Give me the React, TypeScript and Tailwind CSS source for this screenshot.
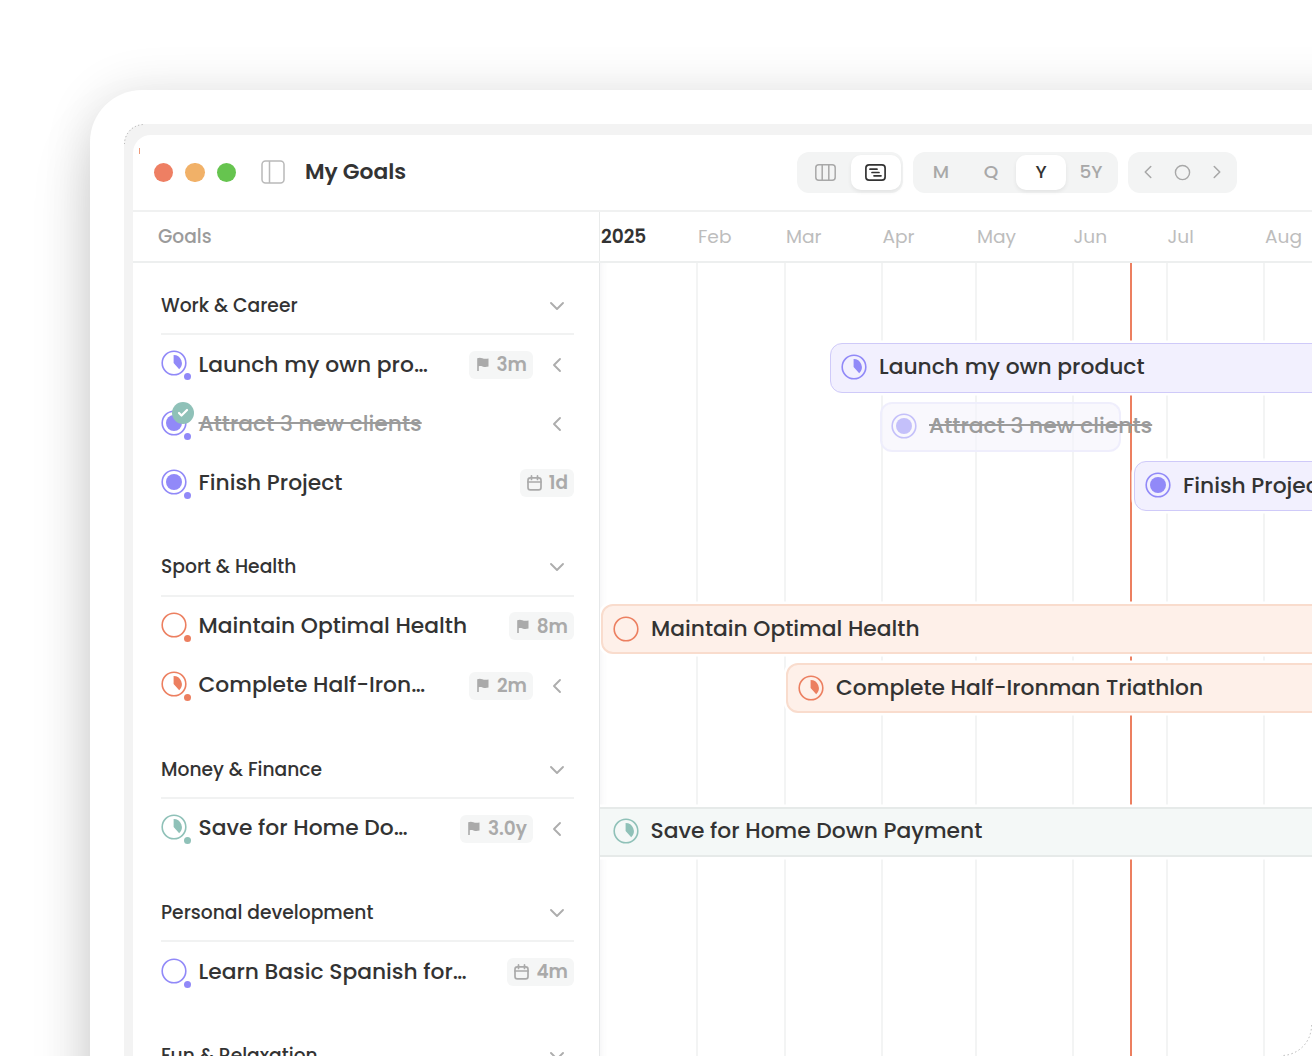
import { Check, ChevronDown, ChevronLeft, ChevronRight, Circle } from "lucide-react"
import { clsx } from "clsx"

type Tone = "violet" | "orange" | "teal"
type Progress = "empty" | "part" | "full"

interface Goal {
  title: string
  short?: string
  tone: Tone
  progress: Progress
  due?: string
  dueIcon?: "flag" | "calendar"
  hasChildren?: boolean
  done?: boolean
  bar?: string
}

interface Section {
  name: string
  goals: Goal[]
}

const sections: Section[] = [
  {
    name: "Work & Career",
    goals: [
      {
        title: "Launch my own product",
        short: "Launch my own pro…",
        tone: "violet",
        progress: "part",
        due: "3m",
        dueIcon: "flag",
        hasChildren: true,
        bar: "ml-[229.5px] w-[600px]",
      },
      {
        title: "Attract 3 new clients",
        tone: "violet",
        progress: "full",
        hasChildren: true,
        done: true,
        bar: "ml-[279.5px] w-[241.5px]",
      },
      {
        title: "Finish Project",
        tone: "violet",
        progress: "full",
        due: "1d",
        dueIcon: "calendar",
        bar: "ml-[533.5px] w-[300px]",
      },
    ],
  },
  {
    name: "Sport & Health",
    goals: [
      {
        title: "Maintain Optimal Health",
        tone: "orange",
        progress: "empty",
        due: "8m",
        dueIcon: "flag",
        bar: "ml-[1px] w-[900px]",
      },
      {
        title: "Complete Half-Ironman Triathlon",
        short: "Complete Half-Iron…",
        tone: "orange",
        progress: "part",
        due: "2m",
        dueIcon: "flag",
        hasChildren: true,
        bar: "ml-[186px] w-[800px]",
      },
    ],
  },
  {
    name: "Money & Finance",
    goals: [
      {
        title: "Save for Home Down Payment",
        short: "Save for Home Do…",
        tone: "teal",
        progress: "part",
        due: "3.0y",
        dueIcon: "flag",
        hasChildren: true,
        bar: "w-[900px] rounded-none border-x-0 pl-[12.5px]",
      },
    ],
  },
  {
    name: "Personal development",
    goals: [
      {
        title: "Learn Basic Spanish for…",
        tone: "violet",
        progress: "empty",
        due: "4m",
        dueIcon: "calendar",
      },
    ],
  },
  { name: "Fun & Relaxation", goals: [] },
]

const months = [
  { label: "2025", width: "w-[98px]" },
  { label: "Feb", width: "w-[88px]" },
  { label: "Mar", width: "w-[96.5px]" },
  { label: "Apr", width: "w-[94.5px]" },
  { label: "May", width: "w-[96.5px]" },
  { label: "Jun", width: "w-[94px]" },
  { label: "Jul", width: "w-[97.5px]" },
  { label: "Aug", width: "w-[98px]" },
]

const toneText: Record<Tone, string> = {
  violet: "text-[#9189f8]",
  orange: "text-[#ec7f60]",
  teal: "text-[#8fc1b8]",
}

const toneBar: Record<Tone, string> = {
  violet: "border border-[#cfcaf9] bg-[#f2f0fe] pl-[10.5px]",
  orange: "border-2 border-[#f9dccd] bg-[#fef0e9] pl-[10px]",
  teal: "border-2 border-[#e6eae9] bg-[#f4f8f7]",
}

function ProgressIcon({ tone, progress, className }: { tone: Tone; progress: Progress; className?: string }) {
  return (
    <svg viewBox="0 0 26 26" className={clsx("size-[26px] shrink-0", toneText[tone], className)}>
      <circle cx="13" cy="13" r="11.8" fill="none" stroke="currentColor" strokeWidth="1.6" />
      {progress === "full" && <circle cx="13" cy="13" r="8" fill="currentColor" />}
      {progress === "part" && <path d="M12.6 13V5a8.2 8.2 0 0 1 5.6 14.2Z" fill="currentColor" />}
    </svg>
  )
}

function FlagIcon() {
  return (
    <svg viewBox="0 0 14 15" className="h-[15px] w-[14px]" fill="currentColor">
      <path d="M1.2 1.3c1.8-.8 3.3-.8 5.1-.1 1.9.7 3.7.8 6.2.2v8.2c-2.3.7-4.2.6-6-.1-1.4-.5-2.5-.6-3.7-.2v4.7H1.2Z" />
    </svg>
  )
}

function CalendarIcon() {
  return (
    <svg viewBox="0 0 15 16" className="h-4 w-[15px]" fill="none" stroke="currentColor" strokeWidth="1.7" strokeLinecap="round">
      <rect x="1" y="2.8" width="13" height="12" rx="2.4" />
      <path d="M1 7h13M4.5.9v3.6M10.5.9v3.6" />
    </svg>
  )
}

function DueBadge({ goal }: { goal: Goal }) {
  return (
    <div className="flex h-7 items-center gap-[7px] rounded-md bg-[#f5f6f6] pr-[6px] pl-[7px] text-[18.5px] font-semibold text-[#aaaaaa]">
      {goal.dueIcon === "flag" ? <FlagIcon /> : <CalendarIcon />}
      <span>{goal.due}</span>
    </div>
  )
}

function GoalRow({ goal }: { goal: Goal }) {
  return (
    <div className="flex h-[59.15px] items-center">
      <div className="relative -ml-[0.5px] mr-[12px]">
        <ProgressIcon tone={goal.tone} progress={goal.progress} className="-mt-[3px]" />
        <span className={clsx("absolute top-[20px] left-[23.5px] size-[7px] rounded-full bg-current", toneText[goal.tone])} />
        {goal.done && (
          <span className="absolute -top-[11px] left-[11.5px] flex size-[22px] items-center justify-center rounded-full bg-[#8fc1b8] text-white">
            <Check className="size-3" strokeWidth={4.5} />
          </span>
        )}
      </div>
      <span
        className={clsx(
          "flex-1 text-[21.8px] font-medium whitespace-nowrap",
          goal.done ? "text-[#9b9b9b] line-through decoration-[1.5px]" : "text-[#333333]",
        )}
      >
        {goal.short ?? goal.title}
      </span>
      {goal.due && <DueBadge goal={goal} />}
      {goal.hasChildren && <ChevronLeft className="mr-[5px] ml-3 size-6 text-[#adadad]" strokeWidth={1.9} />}
    </div>
  )
}

function GoalBar({ goal }: { goal: Goal }) {
  return (
    <div className="flex h-[59.15px] items-center">
      {goal.bar && (
        <div
          className={clsx(
            "flex h-[50px] shrink-0 items-center gap-3",
            goal.tone !== "teal" && "rounded-xl",
            goal.done
              ? "border-2 border-[#eeecfd]/80 bg-[#f5f4fb]/60 pl-[9.5px]"
              : clsx(toneBar[goal.tone], "shadow-[0_0_0_2.5px_#fff]"),
            goal.bar,
          )}
        >
          <ProgressIcon tone={goal.tone} progress={goal.progress} className={clsx("-mt-px", goal.done && "opacity-50")} />
          <span
            className={clsx(
              "text-[21.8px] font-medium whitespace-nowrap",
              goal.done ? "text-[#9b9b9b] line-through decoration-[1.5px]" : "text-[#333333]",
            )}
          >
            {goal.title}
          </span>
        </div>
      )}
    </div>
  )
}

function Toolbar() {
  const pill = "flex h-[41px] items-center rounded-xl bg-[#f3f4f4]"
  const active = "rounded-[10px] bg-white text-[#333333] shadow-[0_2px_4px_rgba(0,0,0,0.07)]"
  return (
    <div className="flex gap-2.5 text-[#a8a8a8]">
      <div className={clsx(pill, "w-[106px] pl-[3.5px]")}>
        <button className="flex h-[35px] w-[50px] items-center justify-center">
          <svg viewBox="0 0 21 17" className="h-[17px] w-[21px]" fill="none" stroke="currentColor" strokeWidth="1.5">
            <rect x=".8" y=".8" width="19.4" height="15.4" rx="3" />
            <path d="M7.2.8v15.4M13.8.8v15.4" />
          </svg>
        </button>
        <button className={clsx("flex h-[35px] w-[50px] items-center justify-center", active)}>
          <svg viewBox="0 0 21 17" className="h-[17px] w-[21px]" fill="none" stroke="currentColor" strokeWidth="1.7" strokeLinecap="round">
            <rect x=".9" y=".9" width="19.2" height="15.2" rx="3.2" />
            <path d="M5 5.2h7M7 8.5h7M9 11.8h7" />
          </svg>
        </button>
      </div>
      <div className={clsx(pill, "w-[205px] pl-[3px] text-[18.5px] font-medium")}>
        {["M", "Q", "Y", "5Y"].map((range) => (
          <button key={range} className={clsx("h-[35px] w-[50px] pb-px", range === "Y" && active)}>
            {range}
          </button>
        ))}
      </div>
      <div className={clsx(pill, "w-[109px] justify-between px-[9px]")}>
        <ChevronLeft className="size-[22px]" strokeWidth={1.7} />
        <Circle className="size-[17px]" strokeWidth={2} />
        <ChevronRight className="size-[22px]" strokeWidth={1.7} />
      </div>
    </div>
  )
}

function Sidebar() {
  return (
    <aside className="w-[467px] shrink-0 border-r border-[#e6e8e9] pt-[13.5px] pr-[25px] pl-7">
      {sections.map((section) => (
        <section key={section.name} className="pb-[25.2px]">
          <div className="flex h-[58.9px] items-center justify-between border-b-2 border-[#f1f2f2] pt-[2px]">
            <h2 className="text-[18.7px] font-medium text-[#333333]">{section.name}</h2>
            <ChevronDown className="mr-[5px] size-6 text-[#adadad]" strokeWidth={1.9} />
          </div>
          {section.goals.map((goal) => (
            <GoalRow key={goal.title} goal={goal} />
          ))}
        </section>
      ))}
    </aside>
  )
}

function Timeline() {
  return (
    <div className="relative flex-1 overflow-hidden shadow-[inset_8px_0_8px_-8px_rgba(60,60,90,0.08)]">
      {/* Month grid and today marker */}
      <div className="absolute inset-0 flex">
        {months.map((month) => (
          <div key={month.label} className={clsx("shrink-0 border-r-2 border-[#f3f4f4]", month.width)} />
        ))}
      </div>
      <div className="absolute inset-y-0 left-[530px] w-[2px] bg-[#ec7f60]" />

      <div className="relative pt-[16.2px]">
        {sections.map((section) => (
          <div key={section.name} className="pt-[58.9px] pb-[25.2px]">
            {section.goals.map((goal) => (
              <GoalBar key={goal.title} goal={goal} />
            ))}
          </div>
        ))}
      </div>
    </div>
  )
}

export default function App() {
  return (
    <div className="relative h-[1056px] w-[1312px] overflow-hidden bg-white pt-[90px] pl-[90px] font-['Poppins','Inter',sans-serif]">
      <div className="h-[1200px] w-[1500px] rounded-[52px] bg-white pt-[34px] pl-[34px] shadow-[0_0_50px_rgba(0,0,0,0.11),0_40px_60px_rgba(0,0,0,0.15)]">
        <div className="h-[1150px] w-[1450px] rounded-[20px] bg-[#f3f3f3] pt-[11px] pl-[9px]">
          <div className="flex h-[1130px] w-[1179px] flex-col overflow-hidden rounded-tl-[18px] bg-white">
            <header className="flex h-[76.5px] shrink-0 items-center border-b-2 border-[#f0f1f1] pr-[75px] pl-[21px]">
              <div className="flex gap-3">
                <span className="size-[19.3px] rounded-full bg-[#ee7f63]" />
                <span className="size-[19.3px] rounded-full bg-[#f1b168]" />
                <span className="size-[19.3px] rounded-full bg-[#66c44f]" />
              </div>
              <svg viewBox="0 0 24 24" className="ml-[25.5px] size-6 text-[#b9b9b9]" fill="none" stroke="currentColor" strokeWidth="1.5">
                <rect x="1" y="1" width="22" height="22" rx="3.5" />
                <path d="M8.5 1v22" />
              </svg>
              <h1 className="ml-[19.5px] flex-1 pt-px text-[21.8px] font-semibold text-[#333333]">My Goals</h1>
              <Toolbar />
            </header>
            <div className="flex h-[51.5px] shrink-0 items-center border-b-2 border-[#edefef] text-[18.6px]">
              <div className="flex h-full w-[467px] shrink-0 items-center border-r border-[#e9ebeb] pt-[2px] pl-[25px] font-medium text-[#9b9b9b]">
                Goals
              </div>
              {months.map((month, index) => (
                <div
                  key={month.label}
                  className={clsx("shrink-0 pt-[2px]", month.width, index === 0 ? "pl-px font-semibold text-[#333333]" : "text-[#bdbdbd]")}
                >
                  {month.label}
                </div>
              ))}
            </div>
            <div className="flex min-h-0 flex-1">
              <Sidebar />
              <Timeline />
            </div>
          </div>
        </div>
      </div>

      {/* Speckled edges of the screen corners */}
      <svg viewBox="0 0 20 20" className="absolute top-[124px] left-[124px] size-5 text-[#a8a8a8]" fill="none" stroke="currentColor">
        <path d="M.5 20A19.5 19.5 0 0 1 20 .5" strokeDasharray="1 2.5" />
      </svg>
      <svg viewBox="0 0 32 32" className="absolute right-0 bottom-0 size-8 text-[#b8b8b8]" fill="none" stroke="currentColor">
        <path d="M31.5 1A30 30 0 0 1 1 31.5" strokeDasharray="1.5 2.5" />
      </svg>
      <span className="absolute top-[148px] left-[139px] h-[6px] w-px bg-[#ee9a7a]" />
    </div>
  )
}
